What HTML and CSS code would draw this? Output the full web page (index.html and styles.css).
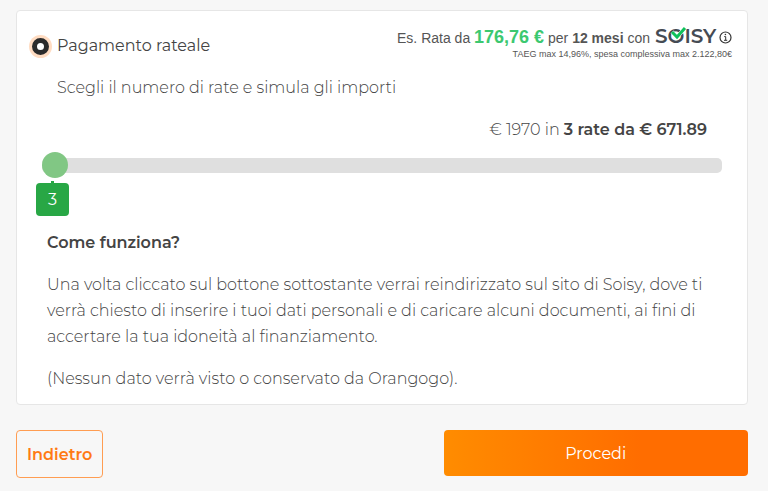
FILE: index.html
```html
<!DOCTYPE html>
<html lang="it">
<head>
  <meta charset="UTF-8">
  <meta name="viewport" content="width=device-width, initial-scale=1.0">
  <title>Pagamento rateale</title>
  <link rel="stylesheet" href="styles.css">
</head>
<body>

<form class="checkout">
  <div class="card">
    <!-- Payment method -->
    <div class="card-header">
      <div class="method">
        <input type="radio" id="rateale" name="pagamento" checked>
        <label for="rateale">Pagamento rateale</label>
      </div>
      <div class="example">
        <div class="example-rate">
          <span>Es. Rata da <strong class="amount">176,76 €</strong> per <strong>12 mesi</strong> con</span>
          <svg class="logo" width="65" height="24" viewBox="0 0 65 24" role="img" aria-label="Soisy">
            <text class="logo-text" x="1" y="18">SOISY</text>
            <path d="M18 7l5 5 8-9" fill="none" stroke="#fff" stroke-width="4"/>
            <path d="M18 7l5 5 8-9" fill="none" stroke="#0fc15b" stroke-width="3"/>
          </svg>
          <svg class="info" width="13" height="13" viewBox="0 0 13 13" role="img" aria-label="Info">
            <circle cx="6.5" cy="6.5" r="5.5" fill="none" stroke="#333" stroke-width="1.2"/>
            <path d="M5.2 5.6h1.5v3.6M5 9.3h3.2" fill="none" stroke="#333"/>
            <circle cx="6.4" cy="3.5" r=".8" fill="#333"/>
          </svg>
        </div>
        <p class="taeg">TAEG max 14,96%, spesa complessiva max 2.122,80€</p>
      </div>
    </div>

    <label class="hint" for="rate">Scegli il numero di rate e simula gli importi</label>
    <p class="total">€ 1970 in <strong>3 rate da € 671.89</strong></p>

    <!-- Number of instalments -->
    <div class="slider">
      <input type="range" id="rate" min="3" max="24" value="3">
      <output class="bubble" for="rate">3</output>
    </div>

    <div class="details">
      <h2>Come funziona?</h2>
      <p>Una volta cliccato sul bottone sottostante verrai reindirizzato sul sito di Soisy, dove ti verrà chiesto di inserire i tuoi dati personali e di caricare alcuni documenti, ai fini di<br> accertare la tua idoneità al finanziamento.</p>
      <p>(Nessun dato verrà visto o conservato da Orangogo).</p>
    </div>
  </div>

  <div class="actions">
    <button type="button" class="btn-back">Indietro</button>
    <button type="submit" class="btn-next">Procedi</button>
  </div>
</form>

</body>
</html>
```
FILE: styles.css
```css
* {
  margin: 0;
  padding: 0;
  box-sizing: border-box;
}

body {
  font-family: Montserrat, Inter, sans-serif;
  font-size: 16px;
  line-height: 26px;
  font-weight: 300;
  background-color: #f7f7f7;
  color: #444;
}

.checkout {
  padding: 10px 20px 13px 16px;
}

.card {
  background: #fff;
  border: 1px solid #e6e6e6;
  border-radius: 4px;
  padding: 14px 15px 12px 14px;
}

/* Header row */
.card-header {
  display: flex;
  justify-content: space-between;
  align-items: flex-start;
}

.method {
  display: flex;
  align-items: center;
  gap: 8px;
  padding-top: 8px;
  font-weight: 400;
}

.method input {
  appearance: none;
  width: 17px;
  height: 17px;
  margin-left: 1px;
  border: 5px solid #2b2b2b;
  border-radius: 50%;
  background: #fff;
  box-shadow: 0 0 0 3px #ffdcc2;
}

.example {
  font-family: Arial, "Liberation Sans", sans-serif;
  font-weight: 400;
  text-align: right;
  color: #555;
}

.example-rate {
  display: flex;
  align-items: center;
  justify-content: flex-end;
  font-size: 14px;
  line-height: 22px;
}

.example-rate .amount {
  font-size: 18px;
  color: #3cc870;
}

.logo {
  margin-left: 4px;
}

.logo-text {
  font-family: Montserrat, Inter, sans-serif;
  font-size: 20px;
  font-weight: 600;
  fill: #454b54;
}

.taeg {
  font-size: 9px;
  line-height: 10px;
}

/* Simulation */
.hint {
  display: block;
  padding: 16px 0 0 26px;
}

.total {
  padding: 16px 25px 0 0;
  text-align: right;
}

.total strong {
  font-weight: 600;
}

.slider {
  position: relative;
  margin: 9px 10px 0 11px;
}

.slider input {
  appearance: none;
  display: block;
  width: 100%;
  height: 26px;
  background: transparent;
}

.slider input::-webkit-slider-runnable-track {
  height: 15px;
  border-radius: 5px;
  background: #dfdfdf;
}

.slider input::-webkit-slider-thumb {
  appearance: none;
  width: 26px;
  height: 26px;
  margin-top: -6px;
  border-radius: 50%;
  background: #81c784;
}

/* Value bubble under the thumb */
.bubble {
  position: absolute;
  top: 31px;
  left: -6px;
  width: 33px;
  line-height: 33px;
  border-radius: 4px;
  background: #28a745;
  color: #fff;
  font-weight: 400;
  text-align: center;
}

.bubble::before {
  content: "";
  position: absolute;
  top: -2px;
  left: 15px;
  width: 3px;
  height: 2px;
  background: #28a745;
}

.details {
  padding: 52px 8px 0 16px;
}

.details h2 {
  font-size: 16px;
  font-weight: 600;
}

.details p {
  margin-top: 16px;
}

/* Buttons */
.actions {
  display: flex;
  justify-content: space-between;
  align-items: flex-start;
  margin-top: 25px;
}

.actions button {
  font-family: inherit;
  font-size: 16px;
  border-radius: 4px;
  cursor: pointer;
}

.btn-back {
  height: 48px;
  padding: 0 10px;
  border: 1px solid #ff9d52;
  background: transparent;
  color: #ff7a14;
  font-weight: 600;
}

.btn-next {
  width: 41.6%;
  height: 46px;
  border: 0;
  background: linear-gradient(to right, #ff8c00, #ff6d00 65%);
  color: #fff;
  font-weight: 400;
}
```
